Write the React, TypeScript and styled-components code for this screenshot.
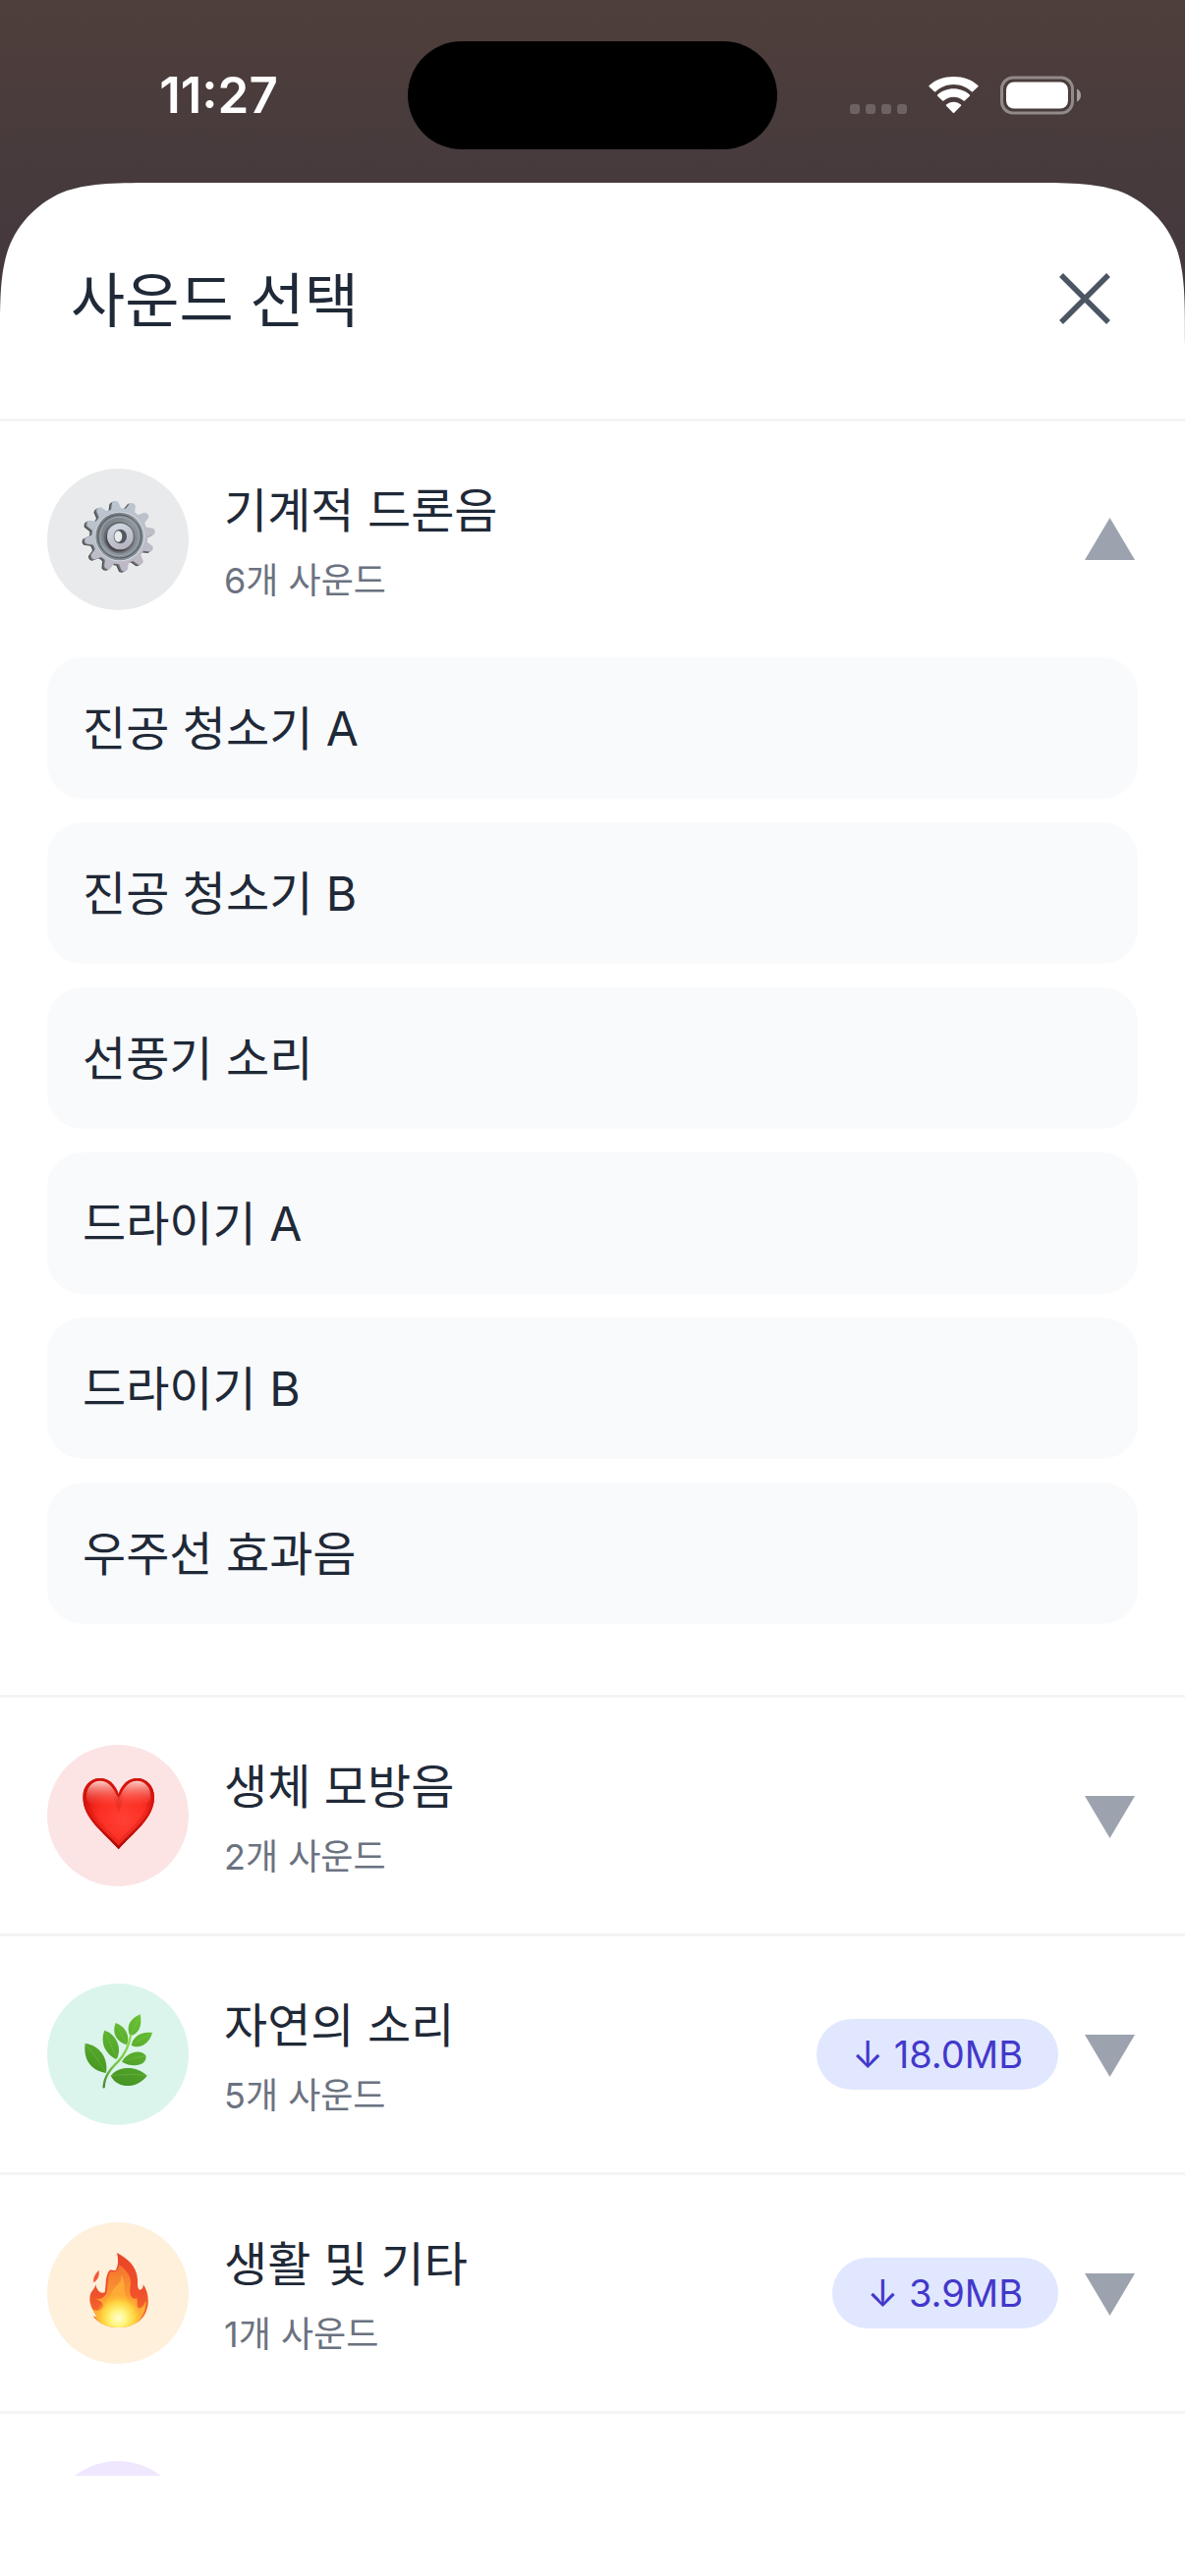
import React, { useState } from 'react';
import styled, { createGlobalStyle } from 'styled-components';

const colors = {
  ink: '#1f2937',
  muted: '#6b7280',
  faint: '#9ca3af',
  close: '#4b5563',
  line: '#f3f4f6',
  item: '#f9fafc',
  pill: '#e0e7ff',
  pillText: '#4338ca',
};

const GlobalStyle = createGlobalStyle`
  *, *::before, *::after { box-sizing: border-box; }
  body {
    margin: 0;
    background: #fff;
    color: ${colors.ink};
    font-family: Inter, 'Noto Sans CJK KR', sans-serif;
    -webkit-font-smoothing: antialiased;
  }
  button { font: inherit; color: inherit; border: 0; background: none; padding: 0; text-align: left; cursor: pointer; }
  h1, h2, p, ul { margin: 0; padding: 0; font-weight: 400; }
  ul { list-style: none; }
`;

const Screen = styled.div`
  display: flex;
  flex-direction: column;
  height: 100vh;
  overflow: hidden;
  background: linear-gradient(#4f3f3b 0, #463a3d 186px, #44383e 360px);
`;

const StatusBar = styled.header`
  flex: none;
  display: grid;
  grid-template-columns: 1fr 376px 1fr;
  align-items: center;
  height: 186px;
  padding-top: 8px;
`;

const Clock = styled.time`
  justify-self: center;
  padding-left: 30px;
  font-size: 51px;
  line-height: 60px;
  font-weight: 600;
  color: #fff;
`;

const Island = styled.div`
  height: 110px;
  border-radius: 55px;
  background: #000;
`;

const StatusIcons = styled.div`
  display: flex;
  align-items: center;
  justify-content: flex-end;
  gap: 22px;
  padding-right: 106px;
`;

const Sheet = styled.main`
  position: relative;
  flex: 1;
  min-height: 0;
  display: flex;
  flex-direction: column;
  padding-bottom: 102px;
  background: #fff;
`;

const Corner = styled.svg<{ $side: 'left' | 'right' }>`
  position: absolute;
  top: 0;
  ${({ $side }) => $side}: 0;
  width: 165px;
  height: 165px;
  ${({ $side }) => $side === 'right' && 'transform: scaleX(-1);'}
`;

const SheetHeader = styled.div`
  flex: none;
  display: flex;
  align-items: center;
  justify-content: space-between;
  height: 243px;
  padding: 0 72px;
  border-bottom: 3px solid ${colors.line};
`;

const Title = styled.h1`
  font-size: 60px;
  line-height: 72px;
`;

const CloseButton = styled.button`
  display: flex;
  padding: 0 3px 4px;
`;

const CategoryList = styled.ul`
  flex: 1;
  min-height: 0;
  overflow: hidden auto;
  scrollbar-width: none;
`;

const Category = styled.li`
  border-bottom: 3px solid ${colors.line};
`;

const CategoryButton = styled.button`
  display: flex;
  align-items: center;
  gap: 36px;
  width: 100%;
  padding: 48px;
`;

const Badge = styled.span<{ $tint: string }>`
  flex: none;
  display: grid;
  place-items: center;
  width: 144px;
  height: 144px;
  border-radius: 50%;
  background: ${({ $tint }) => $tint};
`;

const Labels = styled.span`
  flex: 1;
  display: flex;
  flex-direction: column;
  gap: 8px;
  padding-top: 10px;
`;

const Name = styled.span`
  font-size: 48px;
  line-height: 66px;
`;

const Count = styled.span`
  font-size: 36px;
  line-height: 60px;
  color: ${colors.muted};
`;

const SizePill = styled.span`
  padding: 0 36px;
  border-radius: 36px;
  background: ${colors.pill};
  color: ${colors.pillText};
  font-size: 38px;
  line-height: 72px;
`;

const Trailing = styled.span`
  display: flex;
  align-items: center;
  gap: 27px;
  padding-right: 3px;
`;

const SoundList = styled.ul`
  display: flex;
  flex-direction: column;
  gap: 24px;
  padding: 0 48px 72px;
`;

const SoundButton = styled.button`
  display: block;
  width: 100%;
  padding: 37px 36px 35px;
  border-radius: 36px;
  background: ${colors.item};
  font-size: 48px;
  line-height: 72px;
`;

const SheetCorner = ({ side }: { side: 'left' | 'right' }) => (
  <Corner $side={side} viewBox="0 0 165 165" aria-hidden>
    <defs>
      <linearGradient id={`corner-${side}`} x1="0" y1="0" x2="0" y2="1">
        <stop offset="0" stopColor="#463a3d" />
        <stop offset="1" stopColor="#44383e" />
      </linearGradient>
    </defs>
    <path
      d="M0 0H165C117.6 0 93.8 0 68.2 8.1C40.3 18.3 18.3 40.3 8.1 68.2C0 93.8 0 117.6 0 165Z"
      fill={`url(#corner-${side})`}
    />
  </Corner>
);

const SignalDots = () => (
  <svg width="58" height="38" viewBox="0 0 58 38" fill="#fff" fillOpacity=".2" aria-hidden>
    {[0, 16, 32, 48].map((x) => (
      <rect key={x} x={x} y="28" width="10" height="10" rx="3" />
    ))}
  </svg>
);

const Wifi = () => (
  <svg width="51" height="38" viewBox="0 0 51 38" fill="#fff" aria-hidden>
    <path d="M25.5 8C32.6 8 39 10.8 43.8 15.3C44.2 15.7 44.7 15.7 45 15.3L50.4 10.3C50.8 9.9 50.8 9.4 50.4 9C43.9 3 35.2 0 25.5 0S7.1 3 .6 9C.2 9.4 .2 9.9 .6 10.3L6 15.3C6.3 15.7 6.8 15.7 7.2 15.3C12 10.8 18.4 8 25.5 8Z" />
    <path d="M25.5 20.7C29.4 20.7 32.9 22.1 35.6 24.5C36 24.8 36.5 24.8 36.8 24.5L41.9 19.8C42.3 19.4 42.3 18.9 41.9 18.5C37.6 14.6 31.8 12.3 25.5 12.3S13.4 14.6 9.1 18.5C8.7 18.9 8.7 19.4 9.1 19.8L14.2 24.5C14.5 24.8 15 24.8 15.4 24.5C18.1 22.1 21.6 20.7 25.5 20.7Z" />
    <path d="M33 28.6C33.4 28.9 33.4 29.5 33 29.8L26.2 36.8C25.8 37.2 25.2 37.2 24.8 36.8L18 29.8C17.6 29.5 17.6 28.9 18 28.6C20 26.8 22.6 25.7 25.5 25.7S31 26.8 33 28.6Z" />
  </svg>
);

const Battery = () => (
  <svg width="82" height="40" viewBox="0 0 82 40" aria-hidden>
    <rect x="1.5" y="2" width="72" height="36" rx="11.5" fill="none" stroke="#fff" strokeOpacity=".4" strokeWidth="3" />
    <rect x="6" y="6.5" width="63" height="27" rx="8" fill="#fff" />
    <path d="M78 13.5C80.4 14.5 82 17 82 20C82 23 80.4 25.5 78 26.5Z" fill="#fff" fillOpacity=".5" />
  </svg>
);

const CloseIcon = () => (
  <svg width="54" height="54" viewBox="0 0 54 54" stroke={colors.close} strokeWidth="5.5" aria-hidden>
    <path d="M3 3L51 51M51 3L3 51" />
  </svg>
);

const Triangle = ({ up }: { up: boolean }) => (
  <svg width="51" height="46" viewBox="0 0 51 46" fill={colors.faint} aria-hidden>
    <path d={up ? 'M25.5 1L51 44H0Z' : 'M0 3H51L25.5 46Z'} />
  </svg>
);

/* Outline of a cog around (182, 168): each tooth rises from the rim and narrows to its tip. */
const cogOutline = (() => {
  const at = (r: number, deg: number) => {
    const a = (deg * Math.PI) / 180;
    return `${(182 + r * Math.cos(a)).toFixed(1)} ${(168 + r * Math.sin(a)).toFixed(1)}`;
  };
  let d = '';
  for (let i = 0; i < 12; i += 1) {
    const c = -98 + i * 30;
    d += `${i ? 'L' : 'M'}${at(86, c - 10)}L${at(105, c - 5)}Q${at(112, c)} ${at(105, c + 5)}L${at(86, c + 10)}Q${at(84, c + 15)} ${at(86, c + 20)}`;
  }
  return `${d}Z`;
})();

const GearArt = () => (
  <svg width="120" height="120" viewBox="0 -3 360 360" aria-hidden>
    <defs>
      <linearGradient id="cog-face" x1="0" y1="0" x2=".3" y2="1">
        <stop offset="0" stopColor="#b9c6d1" />
        <stop offset=".5" stopColor="#bcc1ca" />
        <stop offset="1" stopColor="#bdb9c4" />
      </linearGradient>
      <linearGradient id="cog-dish" x1="0" y1="0" x2="1" y2="1">
        <stop offset="0" stopColor="#6e767c" />
        <stop offset=".5" stopColor="#8d959b" />
        <stop offset="1" stopColor="#7b858c" />
      </linearGradient>
      <linearGradient id="cog-hub" x1="0" y1="0" x2=".4" y2="1">
        <stop offset="0" stopColor="#d3dde6" />
        <stop offset="1" stopColor="#b7b6c3" />
      </linearGradient>
    </defs>
    <path d={cogOutline} fill="#4d4a48" transform="translate(-4 3)" />
    <path d={cogOutline} fill="#69727a" transform="translate(-1 1)" />
    <path d={cogOutline} fill="url(#cog-face)" transform="translate(4 -1)" />
    <circle cx="186" cy="168" r="76" fill="#d0d8df" />
    <circle cx="185" cy="168" r="73" fill="url(#cog-dish)" />
    <circle cx="185" cy="168" r="66" fill="none" stroke="#50565c" strokeWidth="3" />
    <circle cx="185" cy="168" r="59" fill="none" stroke="#a1a9af" strokeWidth="3" />
    <circle cx="184" cy="171" r="48" fill="#686d73" />
    <circle cx="183" cy="174" r="40" fill="#494347" />
    <circle cx="187" cy="168" r="40" fill="url(#cog-hub)" />
    <ellipse cx="187" cy="168" rx="20" ry="22" fill="#4f5962" />
    <ellipse cx="181" cy="168" rx="12" ry="17" fill="#e9eaec" />
  </svg>
);

const HEART =
  'M182 138C172 107 150 90 125 90C95 90 73 114 73 148C73 213 136 255 182 307C228 255 291 213 291 148C291 114 268 90 239 90C214 90 192 107 182 138Z';

const HeartArt = () => (
  <svg width="120" height="120" viewBox="0 24 360 360" aria-hidden>
    <defs>
      <radialGradient id="heart-fill" gradientUnits="userSpaceOnUse" cx="195" cy="215" r="135">
        <stop offset="0" stopColor="#ff4034" />
        <stop offset=".55" stopColor="#fc2e23" />
        <stop offset="1" stopColor="#d8140c" />
      </radialGradient>
      <linearGradient id="heart-shine" x1="0" y1="0" x2="0" y2="1">
        <stop offset="0" stopColor="#ffd9d2" stopOpacity=".95" />
        <stop offset="1" stopColor="#ff5548" stopOpacity="0" />
      </linearGradient>
      <linearGradient id="heart-edge" x1="0" y1="0" x2="0" y2="1">
        <stop offset="0" stopColor="#d3140c" />
        <stop offset=".5" stopColor="#d3140c" stopOpacity=".8" />
        <stop offset="1" stopColor="#a80a06" />
      </linearGradient>
      <clipPath id="heart-clip"><path d={HEART} /></clipPath>
    </defs>
    <path d={HEART} fill="url(#heart-fill)" />
    <g clipPath="url(#heart-clip)">
      <path d={HEART} fill="none" stroke="#b80c06" strokeOpacity=".2" strokeWidth="36" />
      <path d={HEART} fill="none" stroke="url(#heart-edge)" strokeWidth="15" />
    </g>
    <path d="M85 155C80 120 100 98 126 98C148 98 165 116 176 142C178 148 186 148 188 142C199 116 216 98 238 98C264 98 284 120 279 155C278 185 86 185 85 155Z" fill="url(#heart-shine)" />
  </svg>
);

const LEAVES = [
  { d: 'M80 150C118 154 152 188 144 240C102 234 73 203 80 150Z', vein: 'M80 150Q110 185 144 240' },
  { d: 'M139 110C170 118 196 160 176 198C143 184 124 148 139 110Z', vein: 'M139 110Q158 150 176 198' },
  { d: 'M173 88C200 96 219 125 207 154C178 146 160 120 173 88Z', vein: 'M173 88Q190 120 207 154' },
  { d: 'M248 61C255 92 246 122 217 127C203 97 218 74 248 61Z', vein: 'M248 61Q236 95 217 127' },
  { d: 'M285 117C275 154 243 168 221 155C226 128 252 112 285 117Z', vein: 'M285 117Q255 135 221 155' },
  { d: 'M192 206C206 178 247 165 265 186C272 215 228 227 192 206Z', vein: 'M192 206Q230 192 265 188' },
  { d: 'M158 249C182 216 238 218 269 248C239 289 180 290 158 249Z', vein: 'M158 249Q210 240 269 248' },
];

const HerbArt = () => (
  <svg width="120" height="120" viewBox="0 3 360 360" fill="none" strokeLinecap="round" aria-hidden>
    <defs>
      <linearGradient id="leaf" gradientUnits="userSpaceOnUse" x1="240" y1="60" x2="150" y2="285">
        <stop offset="0" stopColor="#69c035" />
        <stop offset=".5" stopColor="#57ab2c" />
        <stop offset="1" stopColor="#428f22" />
      </linearGradient>
      <linearGradient id="stem" gradientUnits="userSpaceOnUse" x1="220" y1="120" x2="137" y2="286">
        <stop offset="0" stopColor="#8fdc50" />
        <stop offset=".6" stopColor="#76c543" />
        <stop offset="1" stopColor="#4f8034" />
      </linearGradient>
    </defs>
    {LEAVES.map(({ d, vein }) => (
      <React.Fragment key={d}>
        <path d={d} fill="url(#leaf)" />
        <path d={vein} stroke="#85cf4e" strokeOpacity=".35" strokeWidth="3" />
      </React.Fragment>
    ))}
    <path d="M137 283C139 250 155 230 180 206C204 180 214 155 219 126" stroke="url(#stem)" strokeWidth="7" />
  </svg>
);

const FireArt = () => (
  <svg width="120" height="120" viewBox="0 12 360 360" aria-hidden>
    <defs>
      <linearGradient id="flame-outer" x1="0" y1="0" x2="0" y2="1">
        <stop offset="0" stopColor="#ea4427" />
        <stop offset=".55" stopColor="#f0502a" />
        <stop offset="1" stopColor="#f7802c" />
      </linearGradient>
      <linearGradient id="flame-mid" x1="0" y1="0" x2="0" y2="1">
        <stop offset="0" stopColor="#f3722f" />
        <stop offset=".5" stopColor="#fd9a32" />
        <stop offset="1" stopColor="#ffc83a" />
      </linearGradient>
      <radialGradient id="flame-core" gradientUnits="userSpaceOnUse" cx="182" cy="268" r="72">
        <stop offset="0" stopColor="#fffdd4" />
        <stop offset=".35" stopColor="#fff47c" />
        <stop offset=".7" stopColor="#ffd83f" stopOpacity=".85" />
        <stop offset="1" stopColor="#ffb030" stopOpacity="0" />
      </radialGradient>
      <clipPath id="flame-clip">
        <path d="M177 69C208 86 238 110 240 150C241 165 238 176 246 182C255 182 258 174 257 165C271 184 276 215 270 236C262 275 225 297 183 297C140 297 116 280 104 262L118 266C98 240 91 217 95 200C98 186 109 181 112 166C116 186 128 195 140 190C145 165 140 140 155 122C163 120 168 125 173 122C183 105 181 88 177 69Z" />
      </clipPath>
    </defs>
    <path d="M122 122C125 140 117 153 106 160C103 146 110 134 122 122Z" fill="#ef5a3c" />
    <g clipPath="url(#flame-clip)">
      <rect x="80" y="60" width="210" height="245" fill="url(#flame-outer)" />
      <path d="M184 106C206 122 226 142 217 178C214 200 226 214 238 208C242 225 234 240 246 238C256 236 262 226 266 214C268 262 232 302 183 300C142 300 112 284 102 240C112 250 132 246 136 230C130 216 118 212 106 208C120 214 138 208 145 192C152 166 146 140 158 126C172 130 180 124 184 106Z" fill="url(#flame-mid)" />
      <path d="M191 136C204 160 196 176 203 198C210 218 224 228 226 248C238 246 244 250 250 244C240 290 214 300 183 300C148 300 122 286 112 258C128 262 138 250 140 232C142 208 158 204 164 184C174 166 192 164 191 136Z" fill="#ffb238" fillOpacity=".75" />
      <circle cx="182" cy="262" r="72" fill="url(#flame-core)" />
    </g>
  </svg>
);

interface CategoryData {
  id: string;
  tint: string;
  name?: string;
  count?: string;
  size?: string;
  art?: React.ReactNode;
  sounds?: string[];
}

const CATEGORIES: CategoryData[] = [
  {
    id: 'machine',
    tint: '#e9eaec',
    name: '기계적 드론음',
    count: '6개 사운드',
    art: <GearArt />,
    sounds: ['진공 청소기 A', '진공 청소기 B', '선풍기 소리', '드라이기 A', '드라이기 B', '우주선 효과음'],
  },
  { id: 'body', tint: '#fce4e4', name: '생체 모방음', count: '2개 사운드', art: <HeartArt /> },
  { id: 'nature', tint: '#dbf5ec', name: '자연의 소리', count: '5개 사운드', size: '18.0MB', art: <HerbArt /> },
  { id: 'living', tint: '#fef0db', name: '생활 및 기타', count: '1개 사운드', size: '3.9MB', art: <FireArt /> },
  { id: 'more', tint: '#eee7fe' },
];

export default function App() {
  const [openId, setOpenId] = useState('machine');

  return (
    <>
      <GlobalStyle />
      <Screen>
        <StatusBar>
          <Clock>11:27</Clock>
          <Island />
          <StatusIcons>
            <SignalDots />
            <Wifi />
            <Battery />
          </StatusIcons>
        </StatusBar>
        <Sheet>
          <SheetCorner side="left" />
          <SheetCorner side="right" />
          <SheetHeader>
            <Title>사운드 선택</Title>
            <CloseButton type="button">
              <CloseIcon />
            </CloseButton>
          </SheetHeader>
          <CategoryList>
            {CATEGORIES.map(({ id, tint, name, count, size, art, sounds }) => {
              const open = id === openId;
              return (
                <Category key={id}>
                  <CategoryButton type="button" aria-expanded={open} onClick={() => setOpenId(open ? '' : id)}>
                    <Badge $tint={tint}>{art}</Badge>
                    {name && (
                      <>
                        <Labels>
                          <Name>{name}</Name>
                          <Count>{count}</Count>
                        </Labels>
                        <Trailing>
                          {size && <SizePill>↓ {size}</SizePill>}
                          <Triangle up={open} />
                        </Trailing>
                      </>
                    )}
                  </CategoryButton>
                  {open && sounds && (
                    <SoundList>
                      {sounds.map((sound) => (
                        <li key={sound}>
                          <SoundButton type="button">{sound}</SoundButton>
                        </li>
                      ))}
                    </SoundList>
                  )}
                </Category>
              );
            })}
          </CategoryList>
        </Sheet>
      </Screen>
    </>
  );
}
